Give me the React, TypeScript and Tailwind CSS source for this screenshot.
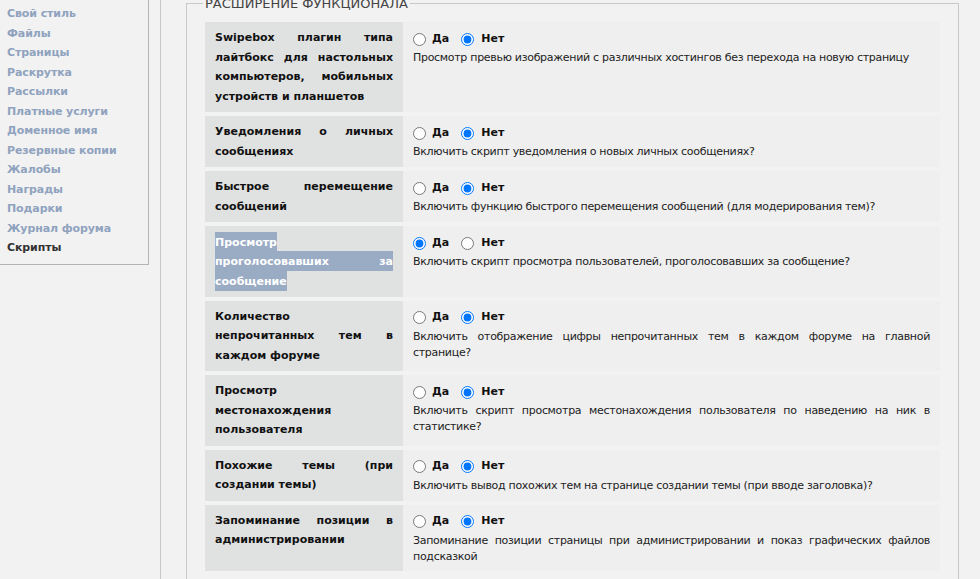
import React from "react";

const side = [
  "Свой стиль",
  "Файлы",
  "Страницы",
  "Раскрутка",
  "Рассылки",
  "Платные услуги",
  "Доменное имя",
  "Резервные копии",
  "Жалобы",
  "Награды",
  "Подарки",
  "Журнал форума",
];

type Row = { label: React.ReactNode; desc: React.ReactNode; yes: boolean; hl?: boolean };

const rows: Row[] = [
  {
    label: "Swipebox плагин типа лайтбокс для настольных компьютеров, мобильных устройств и планшетов",
    desc: "Просмотр превью изображений с различных хостингов без перехода на новую страницу",
    yes: false,
  },
  {
    label: "Уведомления о личных сообщениях",
    desc: "Включить скрипт уведомления о новых личных сообщениях?",
    yes: false,
  },
  {
    label: "Быстрое перемещение сообщений",
    desc: "Включить функцию быстрого перемещения сообщений (для модерирования тем)?",
    yes: false,
  },
  {
    label: "Просмотр проголосовавших за сообщение",
    desc: "Включить скрипт просмотра пользователей, проголосовавших за сообщение?",
    yes: true,
    hl: true,
  },
  {
    label: (
      <>
        Количество
        <br />
        непрочитанных тем в каждом форуме
      </>
    ),
    desc: (
      <>
        Включить отображение цифры непрочитанных тем в каждом форуме на главной
        <br />
        странице?
      </>
    ),
    yes: false,
  },
  {
    label: "Просмотр местонахождения пользователя",
    desc: "Включить скрипт просмотра местонахождения пользователя по наведению на ник в статистике?",
    yes: false,
  },
  {
    label: "Похожие темы (при создании темы)",
    desc: "Включить вывод похожих тем на странице создании темы (при вводе заголовка)?",
    yes: false,
  },
  {
    label: "Запоминание позиции в администрировании",
    desc: "Запоминание позиции страницы при администрировании и показ графических файлов подсказкой",
    yes: false,
  },
];

export default function App() {
  return (
    <div
      className="h-[579px] w-[980px] overflow-hidden bg-[#f2f2f2] text-[11px] text-[#222]"
      style={{ fontFamily: '"DejaVu Sans", Verdana, sans-serif' }}
    >
      <div className="flex items-start">
        <div className="w-[149px] shrink-0 border-r border-b border-[#b4b4b4] pl-[7px] pt-[4px] pb-[6px]">
          {side.map((s) => (
            <div key={s} className="font-bold leading-[19.5px] tracking-[-0.1px] text-[#8fa2be]">
              {s}
            </div>
          ))}
          <div className="font-bold leading-[19.5px] tracking-[-0.1px] text-[#333]">Скрипты</div>
        </div>
        <div className="ml-[11px] h-[700px] flex-1 border-l border-[#c6c6c6] pl-[25px]">
          <fieldset className="-mt-[4px] w-[773px] border border-[#c9c9c9] px-[18px] pt-[11px] pb-[10px]">
            <legend className="-ml-[2px] px-[2px] text-[13px] leading-[15px] text-[#444]">
              РАСШИРЕНИЕ ФУНКЦИОНАЛА
            </legend>
            <div className="flex flex-col gap-[4px]">
              {rows.map((r, i) => (
                <div key={i} className="flex">
                  <div className="w-[198px] shrink-0 bg-[#e0e1e1] px-[10px] py-[6px] text-justify font-bold leading-[19.5px] text-[#111]">
                    {r.hl ? (
                      <span className="bg-[#9aabc4] py-[3.5px] text-white">{r.label}</span>
                    ) : (
                      r.label
                    )}
                  </div>
                  <div className="flex-1 bg-[#efefef] px-[10px] pt-[7px] pb-[6px]">
                    <div className="flex h-[20px] items-center">
                      <input
                        type="radio"
                        name={"r" + i}
                        defaultChecked={r.yes}
                        className="m-0 h-[13px] w-[13px] accent-[#0075ff]"
                      />
                      <span className="ml-[6px] mr-[12px] font-bold text-[#111]">Да</span>
                      <input
                        type="radio"
                        name={"r" + i}
                        defaultChecked={!r.yes}
                        className="m-0 h-[13px] w-[13px] accent-[#0075ff]"
                      />
                      <span className="ml-[7px] font-bold text-[#111]">Нет</span>
                    </div>
                    <div
                      className={
                        i === 4
                          ? "mt-[1px] text-justify leading-[16px] tracking-[-0.3px] text-[#222] [text-align-last:justify]"
                          : "mt-[1px] text-justify leading-[16px] tracking-[-0.3px] text-[#222]"
                      }
                    >
                      {r.desc}
                    </div>
                  </div>
                </div>
              ))}
            </div>
          </fieldset>
        </div>
      </div>
    </div>
  );
}
